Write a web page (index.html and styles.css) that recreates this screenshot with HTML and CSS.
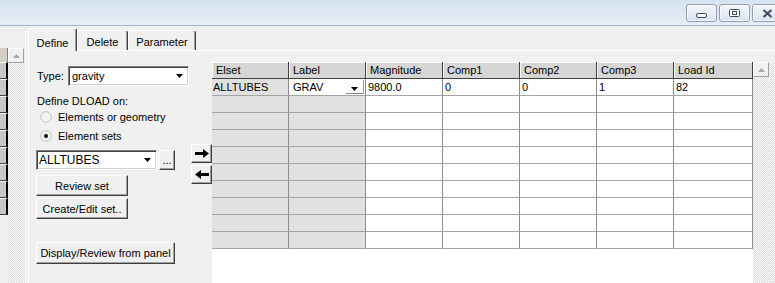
FILE: index.html
```html
<!DOCTYPE html>
<html>
<head>
<meta charset="utf-8">
<link rel="stylesheet" href="styles.css">
</head>
<body>
<div class="titlebar">
  <div class="wbtns">
    <div class="wbtn"><svg class="ic-min" width="11" height="5" viewBox="0 0 11 5"><rect x=".5" y=".5" width="10" height="4" rx="1.5" fill="#fbfcfe" stroke="#3d4d63"/></svg></div>
    <div class="wbtn"><svg width="11" height="8" viewBox="0 0 11 8"><rect x=".5" y=".5" width="10" height="7" rx="1" fill="#fbfcfe" stroke="#3d4d63"/><rect x="3.5" y="2.5" width="4" height="3" fill="none" stroke="#3d4d63"/></svg></div>
    <div class="wbtn"><svg width="11" height="9" viewBox="0 0 11 9"><path d="M1.5 1l8 7M9.5 1l-8 7" stroke="#3d4d63" stroke-width="2.2" fill="none"/></svg></div>
  </div>
</div>
<div class="main">
  <div class="leftstrip">
    <div class="ls-inner">
      <div class="ls-cells">
        <div class="ls-head"></div>
        <div class="ls-cell"></div><div class="ls-cell"></div><div class="ls-cell"></div>
        <div class="ls-cell"></div><div class="ls-cell"></div><div class="ls-cell"></div>
        <div class="ls-cell"></div><div class="ls-cell"></div><div class="ls-cell"></div>
      </div>
      <div class="ls-track">
        <div class="sb-up"><svg width="7" height="4" viewBox="0 0 7 4"><path d="M3.5 0L7 4H0z" fill="#a8a8a8"/></svg></div>
      </div>
    </div>
  </div>
  <div class="tabs">
    <div class="tabrow">
      <div class="tab tab-define active">Define</div>
      <div class="tab tab-delete">Delete</div>
      <div class="tab tab-param">Parameter</div>
    </div>
    <div class="panel">
      <div class="form">
        <div class="type-row">
          <span class="type-label">Type:</span>
          <div class="select sel-type"><span>gravity</span><svg class="dd" width="7" height="4" viewBox="0 0 7 4"><path d="M0 0h7L3.5 4z" fill="#000"/></svg></div>
        </div>
        <div class="define-label">Define DLOAD on:</div>
        <div class="radio-row">
          <svg width="12" height="12" viewBox="0 0 12 12"><circle cx="6" cy="6" r="5.3" fill="#f2f4f2" stroke="#b9c4b9"/></svg>
          <span>Elements or geometry</span>
        </div>
        <div class="radio-row radio-2">
          <svg width="12" height="12" viewBox="0 0 12 12"><circle cx="6" cy="6" r="5.3" fill="#f2f4f2" stroke="#b9c4b9"/><circle cx="6" cy="6" r="2" fill="#000"/></svg>
          <span>Element sets</span>
        </div>
        <div class="combo-row">
          <div class="select sel-set"><span>ALLTUBES</span><svg class="dd" width="7" height="4" viewBox="0 0 7 4"><path d="M0 0h7L3.5 4z" fill="#000"/></svg></div>
          <div class="btn btn-dots">...</div>
        </div>
        <div class="btn btn-review">Review set</div>
        <div class="btn btn-create">Create/Edit set..</div>
        <div class="btn btn-display">Display/Review from panel</div>
      </div>
      <div class="arrows">
        <div class="btn btn-arrow"><svg width="14" height="9" viewBox="0 0 14 9"><path d="M0 3h8V0l6 4.5L8 9V6H0z" fill="#000"/></svg></div>
        <div class="btn btn-arrow"><svg width="14" height="9" viewBox="0 0 14 9"><path d="M14 3H6V0L0 4.5 6 9V6h8z" fill="#000"/></svg></div>
      </div>
      <div class="gridwrap">
        <div class="grid">
          <div class="hc">Elset</div><div class="hc">Label</div><div class="hc">Magnitude</div><div class="hc">Comp1</div><div class="hc">Comp2</div><div class="hc">Comp3</div><div class="hc">Load Id</div>

          <div class="c gray c-first">ALLTUBES</div>
          <div class="c c-label"><span>GRAV</span><span class="ddbtn"><svg width="7" height="4" viewBox="0 0 7 4"><path d="M0 0h7L3.5 4z" fill="#000"/></svg></span></div>
          <div class="c">9800.0</div><div class="c">0</div><div class="c">0</div><div class="c">1</div><div class="c">82</div>

          <div class="c gray"></div><div class="c gray"></div><div class="c"></div><div class="c"></div><div class="c"></div><div class="c"></div><div class="c"></div>
          <div class="c gray"></div><div class="c gray"></div><div class="c"></div><div class="c"></div><div class="c"></div><div class="c"></div><div class="c"></div>
          <div class="c gray"></div><div class="c gray"></div><div class="c"></div><div class="c"></div><div class="c"></div><div class="c"></div><div class="c"></div>
          <div class="c gray"></div><div class="c gray"></div><div class="c"></div><div class="c"></div><div class="c"></div><div class="c"></div><div class="c"></div>
          <div class="c gray"></div><div class="c gray"></div><div class="c"></div><div class="c"></div><div class="c"></div><div class="c"></div><div class="c"></div>
          <div class="c gray"></div><div class="c gray"></div><div class="c"></div><div class="c"></div><div class="c"></div><div class="c"></div><div class="c"></div>
          <div class="c gray"></div><div class="c gray"></div><div class="c"></div><div class="c"></div><div class="c"></div><div class="c"></div><div class="c"></div>
          <div class="c gray"></div><div class="c gray"></div><div class="c"></div><div class="c"></div><div class="c"></div><div class="c"></div><div class="c"></div>
          <div class="c gray"></div><div class="c gray"></div><div class="c"></div><div class="c"></div><div class="c"></div><div class="c"></div><div class="c"></div>
        </div>
      </div>
      <div class="vscroll">
        <div class="sb-up"><svg width="7" height="4" viewBox="0 0 7 4"><path d="M3.5 0L7 4H0z" fill="#a8a8a8"/></svg></div>
      </div>
    </div>
  </div>
</div>
</body>
</html>
```
FILE: styles.css
```css
* { box-sizing: border-box; }
html, body { margin: 0; padding: 0; }
body {
  width: 775px;
  height: 283px;
  overflow: hidden;
  background: #f0f0f0;
  font-family: "Liberation Sans", Arial, sans-serif;
  font-size: 11px;
  color: #000;
}

/* title bar */
.titlebar {
  height: 26px;
  background: linear-gradient(#d7e2f0, #e6edf6);
  border-bottom: 1px solid #a6b3c4;
  display: flex;
  justify-content: flex-end;
  align-items: flex-start;
  padding-top: 4px;
}
.wbtns { display: flex; gap: 2px; margin-right: -8px; }
.wbtn {
  width: 31px;
  height: 18px;
  border: 1px solid #8d9db3;
  border-radius: 3px;
  background: linear-gradient(#f4f7fb, #dbe3ee);
  box-shadow: inset 0 0 0 1px rgba(255,255,255,.7);
  display: flex;
  align-items: center;
  justify-content: center;
}
.ic-min { margin-top: 5px; }

/* main area */
.main { display: flex; height: 257px; }

.leftstrip {
  width: 26px;
  margin-top: 4px;
  margin-right: 2px;
  border-top: 1px solid #e4e4e4;
  border-right: 1px solid #fff;
}
.ls-inner { display: flex; padding-top: 17px; height: 100%; }
.ls-cells { width: 8px; }
.ls-head { height: 14px; background: #d4d0c8; border-right: 1px solid #808080; }
.ls-cell {
  height: 17px;
  background: #c8c8c8;
  border-top: 1px solid #f4f4f4;
  border-right: 2px solid #000;
  border-bottom: 1px solid #404040;
}
.ls-track {
  width: 17px;
  background: repeating-conic-gradient(#fff 0 25%, #d9d9d9 0 50%) 0 0 / 2px 2px;
}
.sb-up {
  width: 16px;
  height: 15px;
  background: #f0f0f0;
  border: 1px solid;
  border-color: #fff #a0a0a0 #a0a0a0 #fff;
  display: flex;
  align-items: center;
  justify-content: center;
}

/* tabs */
.tabs { flex: 1; display: flex; flex-direction: column; min-width: 0; }
.tabrow { height: 24px; display: flex; align-items: flex-end; }
.tab {
  height: 20px;
  border: 1px solid;
  border-bottom: none;
  border-color: #fff #404040 transparent #fff;
  border-radius: 3px 3px 0 0;
  box-shadow: inset -1px 0 #a0a0a0;
  text-align: center;
  line-height: 13px;
  padding-top: 5px;
  background: #f0f0f0;
}
.tab.active {
  height: 23px;
  margin-bottom: -1px;
  padding-top: 8px;
  position: relative;
  z-index: 1;
}
.tab-define { width: 49px; }
.tab-delete { width: 51px; }
.tab-param { width: 68px; }

.panel {
  flex: 1;
  display: flex;
  border-top: 1px solid #fff;
  border-left: 1px solid #fff;
}

/* form */
.form {
  width: 161px;
  padding-left: 7px;
  display: flex;
  flex-direction: column;
  align-items: flex-start;
}
.type-row { display: flex; align-items: center; height: 20px; margin-top: 15px; }
.type-label { width: 32px; padding-left: 1px; }
.select {
  height: 20px;
  background: #fff;
  border: 1px solid;
  border-color: #808080 #fff #fff #808080;
  box-shadow: inset 1px 1px #404040, inset -1px -1px #d4d0c8;
  display: flex;
  align-items: center;
  padding-left: 3px;
}
.select .dd { margin-left: auto; margin-right: 5px; }
.sel-type { width: 121px; }
.sel-set { width: 121px; font-size: 12px; padding-left: 2px; }
.define-label { margin-top: 8px; height: 14px; line-height: 14px; padding-left: 1px; }
.radio-row { height: 17px; display: flex; align-items: center; gap: 6px; padding-left: 4px; }
.radio-2 { margin-top: 2px; }
.combo-row { display: flex; gap: 2px; margin-top: 6px; height: 20px; }

.btn {
  background: #f0f0f0;
  border: 1px solid;
  border-color: #fff #404040 #404040 #fff;
  box-shadow: inset -1px -1px #a0a0a0;
  display: flex;
  align-items: center;
  justify-content: center;
}
.btn-dots { width: 16px; height: 20px; align-items: flex-end; padding-bottom: 3px; }
.btn-review { width: 92px; height: 21px; margin-top: 5px; }
.btn-create { width: 92px; height: 21px; margin-top: 2px; }
.btn-display { width: 139px; height: 22px; margin-top: 23px; }

.arrows {
  width: 22px;
  padding-top: 93px;
  padding-left: 1px;
  display: flex;
  flex-direction: column;
  gap: 2px;
}
.btn-arrow { width: 21px; height: 19px; }

/* grid */
.gridwrap {
  width: 541px;
  margin-top: 11px;
  background: #fff;
}
.grid {
  display: grid;
  grid-template-columns: repeat(6, 77px) 79px;
  grid-auto-rows: 17px;
}
.hc {
  background: #d6d6d6;
  border-right: 1px solid #404040;
  border-bottom: 1px solid #404040;
  box-shadow: inset 1px 1px #fbfbfb;
  padding-left: 4px;
  line-height: 16px;
  white-space: nowrap;
}
.c {
  border-right: 1px solid #8c8c8c;
  border-bottom: 1px solid #a4a4a4;
  padding-left: 2px;
  line-height: 16px;
  white-space: nowrap;
}
.c.gray { background: #e1e1e1; }
.c-first { padding-left: 1px; }
.c-label { display: flex; align-items: center; padding-left: 4px; }
.ddbtn {
  margin-left: auto;
  margin-right: 1px;
  width: 18px;
  height: 14px;
  border-right: 1px solid #a0a0a0;
  border-bottom: 1px solid #808080;
  display: flex;
  align-items: center;
  justify-content: center;
  padding-top: 4px;
}

.vscroll {
  width: 22px;
  margin-top: 11px;
  background: repeating-conic-gradient(#fff 0 25%, #d9d9d9 0 50%) 0 0 / 2px 2px;
}
```
